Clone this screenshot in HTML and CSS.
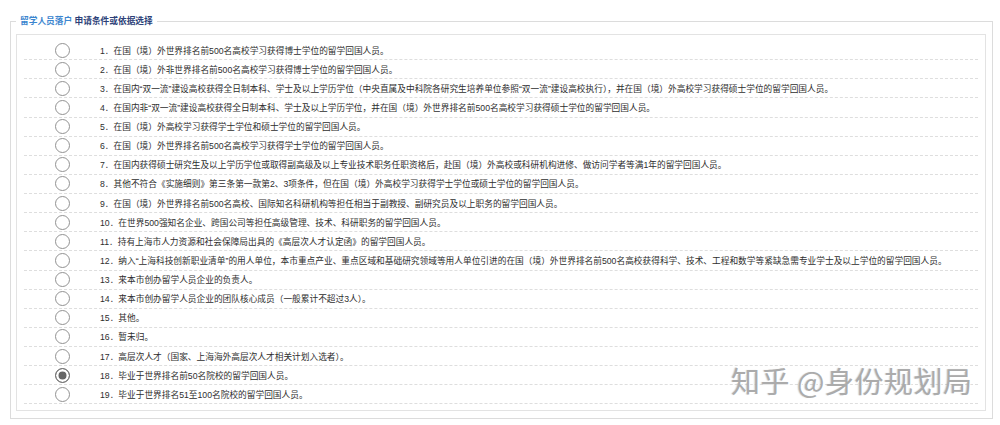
FILE: index.html
```html
<!DOCTYPE html>
<html lang="zh-CN">
<head>
    <meta charset="UTF-8">
    <meta name="viewport" content="width=device-width, initial-scale=1.0">
    <title>留学人员落户</title>
    <link rel="stylesheet" href="styles.css">
</head>
<body>
    <div class="page">
        <fieldset class="apply-box">
            <legend><span class="legend-main">留学人员落户</span> <span class="legend-sub">申请条件或依据选择</span></legend>
            <div class="option-list">
                <label class="option-row"><span class="radio-cell"><input type="radio" name="basis"></span><span class="option-text">1．在国（境）外世界排名前500名高校学习获得博士学位的留学回国人员。</span></label>
                <label class="option-row"><span class="radio-cell"><input type="radio" name="basis"></span><span class="option-text">2．在国（境）外非世界排名前500名高校学习获得博士学位的留学回国人员。</span></label>
                <label class="option-row"><span class="radio-cell"><input type="radio" name="basis"></span><span class="option-text">3．在国内“双一流”建设高校获得全日制本科、学士及以上学历学位（中央直属及中科院各研究生培养单位参照“双一流”建设高校执行），并在国（境）外高校学习获得硕士学位的留学回国人员。</span></label>
                <label class="option-row"><span class="radio-cell"><input type="radio" name="basis"></span><span class="option-text">4．在国内非“双一流”建设高校获得全日制本科、学士及以上学历学位，并在国（境）外世界排名前500名高校学习获得硕士学位的留学回国人员。</span></label>
                <label class="option-row"><span class="radio-cell"><input type="radio" name="basis"></span><span class="option-text">5．在国（境）外高校学习获得学士学位和硕士学位的留学回国人员。</span></label>
                <label class="option-row"><span class="radio-cell"><input type="radio" name="basis"></span><span class="option-text">6．在国（境）外世界排名前500名高校学习获得学士学位的留学回国人员。</span></label>
                <label class="option-row"><span class="radio-cell"><input type="radio" name="basis"></span><span class="option-text">7．在国内获得硕士研究生及以上学历学位或取得副高级及以上专业技术职务任职资格后，赴国（境）外高校或科研机构进修、做访问学者等满1年的留学回国人员。</span></label>
                <label class="option-row"><span class="radio-cell"><input type="radio" name="basis"></span><span class="option-text">8．其他不符合《实施细则》第三条第一款第2、3项条件，但在国（境）外高校学习获得学士学位或硕士学位的留学回国人员。</span></label>
                <label class="option-row"><span class="radio-cell"><input type="radio" name="basis"></span><span class="option-text">9．在国（境）外世界排名前500名高校、国际知名科研机构等担任相当于副教授、副研究员及以上职务的留学回国人员。</span></label>
                <label class="option-row"><span class="radio-cell"><input type="radio" name="basis"></span><span class="option-text">10．在世界500强知名企业、跨国公司等担任高级管理、技术、科研职务的留学回国人员。</span></label>
                <label class="option-row"><span class="radio-cell"><input type="radio" name="basis"></span><span class="option-text">11．持有上海市人力资源和社会保障局出具的《高层次人才认定函》的留学回国人员。</span></label>
                <label class="option-row"><span class="radio-cell"><input type="radio" name="basis"></span><span class="option-text">12．纳入“上海科技创新职业清单”的用人单位，本市重点产业、重点区域和基础研究领域等用人单位引进的在国（境）外世界排名前500名高校获得科学、技术、工程和数学等紧缺急需专业学士及以上学位的留学回国人员。</span></label>
                <label class="option-row"><span class="radio-cell"><input type="radio" name="basis"></span><span class="option-text">13．来本市创办留学人员企业的负责人。</span></label>
                <label class="option-row"><span class="radio-cell"><input type="radio" name="basis"></span><span class="option-text">14．来本市创办留学人员企业的团队核心成员（一般累计不超过3人）。</span></label>
                <label class="option-row"><span class="radio-cell"><input type="radio" name="basis"></span><span class="option-text">15．其他。</span></label>
                <label class="option-row"><span class="radio-cell"><input type="radio" name="basis"></span><span class="option-text">16．暂未归。</span></label>
                <label class="option-row"><span class="radio-cell"><input type="radio" name="basis"></span><span class="option-text">17．高层次人才（国家、上海海外高层次人才相关计划入选者）。</span></label>
                <label class="option-row"><span class="radio-cell"><input type="radio" name="basis" checked></span><span class="option-text">18．毕业于世界排名前50名院校的留学回国人员。</span></label>
                <label class="option-row"><span class="radio-cell"><input type="radio" name="basis"></span><span class="option-text">19．毕业于世界排名51至100名院校的留学回国人员。</span></label>
            </div>
        </fieldset>
        <div class="watermark">知乎 @身份规划局</div>
    </div>
</body>
</html>
```

FILE: styles.css
```css
body {
    margin: 0;
    font-family: "Liberation Sans", "Noto Sans CJK SC", sans-serif;
    color: #2e2e2e;
    background-color: #fff;
}

.page {
    position: relative;
    padding: 15px 7px 0 10px;
}

.apply-box {
    margin: 0;
    padding: 7px 6px 7px 5px;
    border: 1px solid #dcdcdc;
    min-width: 0;
}

.apply-box legend {
    padding: 0 4px;
    margin-left: 0;
    font-size: 8.7px;
    line-height: 12px;
    font-weight: bold;
}

.legend-main {
    color: #3c86cf;
}

.legend-sub {
    color: #2c3f78;
}

.option-list {
    border: 1px solid #e3e3e3;
    padding: 6px 7px 6px 7px;
}

.option-row {
    display: flex;
    align-items: center;
    height: 18.13px;
    border-bottom: 1px dashed #dedede;
    font-size: 8.7px;
    cursor: pointer;
}

.radio-cell {
    width: 76px;
    display: flex;
    justify-content: center;
    flex-shrink: 0;
}

.radio-cell input {
    appearance: none;
    -webkit-appearance: none;
    margin: 0;
    width: 15px;
    height: 15px;
    border: 1px solid #929292;
    border-radius: 50%;
    background-color: #fff;
}

.radio-cell input:checked {
    background-color: #666;
    box-shadow: inset 0 0 0 2.5px #fff;
    border-color: #6f6f6f;
}

.option-text {
    white-space: nowrap;
}

.watermark {
    position: absolute;
    left: 731px;
    top: 359px;
    font-family: "Noto Sans CJK SC", sans-serif;
    font-size: 29px;
    color: #ababab;
    text-shadow: 1px 1px 0 #fff, -1px 0 1px rgba(0, 0, 0, 0.15);
    letter-spacing: 0.5px;
    pointer-events: none;
}
```
